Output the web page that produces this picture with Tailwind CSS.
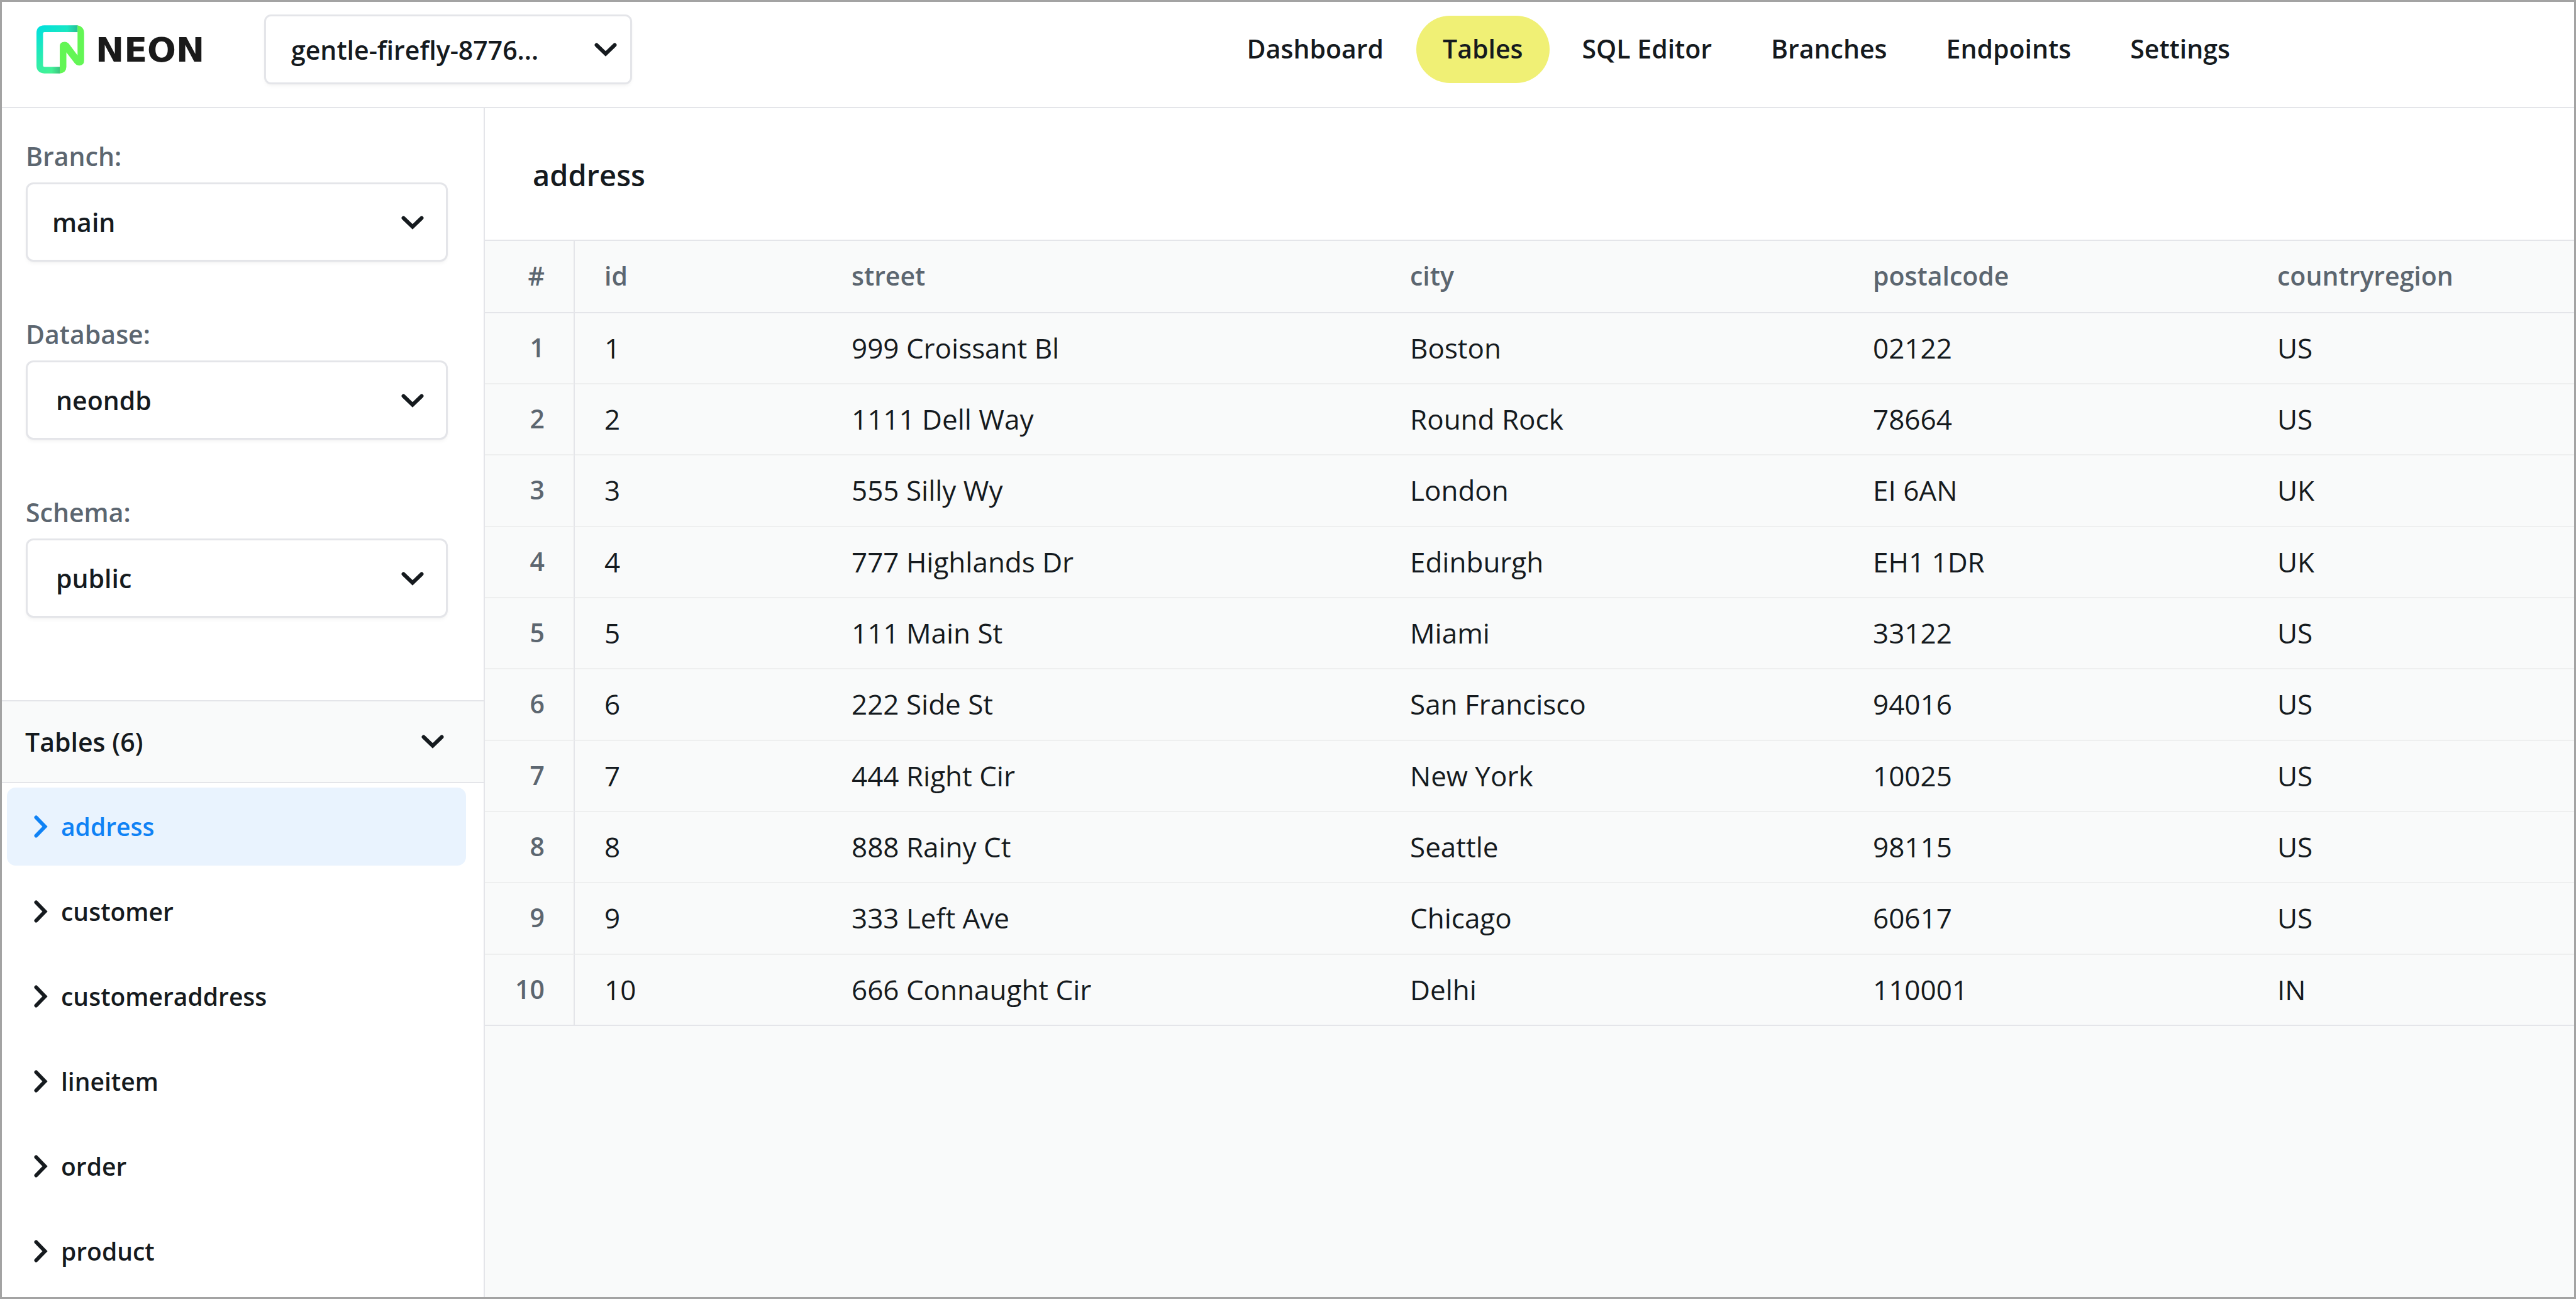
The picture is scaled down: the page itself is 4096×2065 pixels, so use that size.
<!DOCTYPE html>
<html lang="en">
<head>
<meta charset="utf-8">
<title>Neon – Tables</title>
<script src="https://cdn.jsdelivr.net/npm/@tailwindcss/browser@4"></script>
</head>
<body class="min-h-screen bg-white text-[#151a1e] font-['Open_Sans','Noto_Sans',sans-serif] text-[41px] leading-[56px] font-semibold">
<svg class="hidden" aria-hidden="true">
  <symbol id="down" viewBox="0 0 36 22"><path d="M3.5 3.5 18 17.5 32.5 3.5" fill="none" stroke="currentColor" stroke-width="6" stroke-linecap="round" stroke-linejoin="miter"/></symbol>
  <symbol id="right" viewBox="0 0 22 36"><path d="M3.5 3.5 17.5 18 3.5 32.5" fill="none" stroke="currentColor" stroke-width="6" stroke-linecap="round" stroke-linejoin="miter"/></symbol>
</svg>
<div class="flex min-h-screen flex-col border-[3px] border-[#a3a3a3]">
  <header class="flex h-[169px] items-start border-b-2 border-[#e4e5e9] pl-[55px]">
    <a href="#" class="mt-[37px] flex w-[362px] items-center gap-[18px]" aria-label="Neon">
      <svg class="h-[77px] w-[76px]" viewBox="0 0 320 347" preserveAspectRatio="none">
        <defs>
          <linearGradient id="g1" x1="0.1" y1="0" x2="0.6" y2="1"><stop offset="0" stop-color="#00e0de"/><stop offset="1" stop-color="#4df58a"/></linearGradient>
          <linearGradient id="g2" x1="0" y1="0" x2="1" y2="0"><stop offset="0" stop-color="#2e9b74" stop-opacity="0"/><stop offset="1" stop-color="#2e9b74" stop-opacity=".55"/></linearGradient>
        </defs>
        <path d="M52 1H275V50H54Q44 50 44 60V288Q44 298 54 298H157V346H52Q0 342 0 290V56Q0 4 52 1Z" fill="url(#g1)"/>
        <path d="M205 1H276V50H205Z" fill="url(#g2)"/>
        <path d="M100 298H158V346H100Z" fill="url(#g2)"/>
        <path d="M271 1Q319 8 319 58V254Q319 289 286 289Q268 289 256 273L200 195V300Q198 342 156 346V152Q156 119 189 119Q207 119 219 136L275 216V9Z" fill="#63f655"/>
      </svg>
      <span class="pt-[2px] font-['DejaVu_Sans',sans-serif] text-[54px] font-bold leading-[60px] text-[#1a1a1a]">NEON</span>
    </a>
    <div class="relative mt-[20px] w-[585px]">
      <select aria-label="Project" class="h-[111px] w-full appearance-none rounded-[11px] border-[3px] border-[#e4e5e9] bg-white pl-[40px] shadow-md shadow-black/4"><option>gentle-firefly-8776...</option></select>
      <svg class="pointer-events-none absolute right-[24px] top-[45px] h-[22px] w-[36px]"><use href="#down"/></svg>
    </div>
    <nav class="ml-auto mr-[505px] mt-[22px] flex gap-[10px] *:flex *:h-[107px] *:items-center *:rounded-full *:px-[42px] *:pb-[4px]">
      <a href="#">Dashboard</a>
      <a href="#" class="bg-[#f0f075]">Tables</a>
      <a href="#">SQL Editor</a>
      <a href="#">Branches</a>
      <a href="#">Endpoints</a>
      <a href="#">Settings</a>
    </nav>
  </header>
  <div class="flex flex-1">
    <aside class="w-[768px] shrink-0 border-r-2 border-[#e4e5e9]">
      <div class="flex h-[941px] flex-col gap-[87px] pl-[38px] pr-[57px] pt-[48px]">
        <div>
          <label for="branch" class="block h-[70px] text-[#5c6670]">Branch:</label>
          <div class="relative">
            <select id="branch" class="h-[126px] w-full appearance-none rounded-[12px] border-[3px] border-[#e4e5e9] bg-white pl-[39px] shadow-md shadow-black/4"><option>main</option></select>
            <svg class="pointer-events-none absolute right-[38px] top-[53px] h-[22px] w-[36px]"><use href="#down"/></svg>
          </div>
        </div>
        <div>
          <label for="database" class="block h-[70px] text-[#5c6670]">Database:</label>
          <div class="relative">
            <select id="database" class="h-[126px] w-full appearance-none rounded-[12px] border-[3px] border-[#e4e5e9] bg-white pl-[45px] shadow-md shadow-black/4"><option>neondb</option></select>
            <svg class="pointer-events-none absolute right-[38px] top-[53px] h-[22px] w-[36px]"><use href="#down"/></svg>
          </div>
        </div>
        <div>
          <label for="schema" class="block h-[70px] text-[#5c6670]">Schema:</label>
          <div class="relative">
            <select id="schema" class="h-[126px] w-full appearance-none rounded-[12px] border-[3px] border-[#e4e5e9] bg-white pl-[45px] shadow-md shadow-black/4"><option>public</option></select>
            <svg class="pointer-events-none absolute right-[38px] top-[53px] h-[22px] w-[36px]"><use href="#down"/></svg>
          </div>
        </div>
      </div>
      <button class="flex h-[132px] w-full items-center justify-between border-y-2 border-[#e4e5e9] bg-[#f9fafa] pl-[37px] pr-[63px]">Tables (6)<svg class="h-[22px] w-[36px]"><use href="#down"/></svg></button>
      <ul class="flex flex-col gap-[11px] pl-[8px] pr-[28px] pt-[7px] text-[39px] [&_a]:flex [&_a]:h-[124px] [&_a]:items-center [&_a]:gap-[21px] [&_a]:rounded-[14px] [&_a]:pl-[43px]">
        <li><a href="#" class="bg-[#e9f3fe] text-[#0f82f5]"><svg class="h-[36px] w-[22px]"><use href="#right"/></svg>address</a></li>
        <li><a href="#"><svg class="h-[36px] w-[22px]"><use href="#right"/></svg>customer</a></li>
        <li><a href="#"><svg class="h-[36px] w-[22px]"><use href="#right"/></svg>customeraddress</a></li>
        <li><a href="#"><svg class="h-[36px] w-[22px]"><use href="#right"/></svg>lineitem</a></li>
        <li><a href="#"><svg class="h-[36px] w-[22px]"><use href="#right"/></svg>order</a></li>
        <li><a href="#"><svg class="h-[36px] w-[22px]"><use href="#right"/></svg>product</a></li>
      </ul>
    </aside>
    <main class="min-w-0 flex-1 bg-[#f9fafa]">
      <h1 class="flex h-[209px] items-center bg-white pl-[76px] pt-[2px] text-[47px]">address</h1>
      <table class="w-full table-fixed border-separate border-spacing-0 text-left [&_th]:pb-[4px] [&_th]:text-[41px] [&_th]:font-semibold [&_th]:text-[#5c6670] [&_td]:pb-[2px] [&_td]:pl-[47px] [&_th]:pl-[47px] [&_tr>*:first-child]:border-r-2 [&_tr>*:first-child]:pl-0 [&_tr>*:first-child]:pr-[46px] [&_tr>*:first-child]:text-right [&_tr>*]:border-[#e4e5e9] [&_tbody_tr>*]:border-b-2 [&_tbody_tr:not(:last-child)>*]:border-b-[#eeefef]">
        <thead>
          <tr class="h-[117px] [&>*]:border-y-2"><th class="w-[143px]">#</th><th class="w-[393px]">id</th><th class="w-[888px]">street</th><th class="w-[736px]">city</th><th class="w-[643px]">postalcode</th><th>countryregion</th></tr>
        </thead>
        <tbody class="text-[44px] font-normal [&>tr]:h-[113px] [&>tr:nth-child(3n)]:h-[114px]">
          <tr><th>1</th><td>1</td><td>999 Croissant Bl</td><td>Boston</td><td>02122</td><td>US</td></tr>
          <tr><th>2</th><td>2</td><td>1111 Dell Way</td><td>Round Rock</td><td>78664</td><td>US</td></tr>
          <tr><th>3</th><td>3</td><td>555 Silly Wy</td><td>London</td><td>EI 6AN</td><td>UK</td></tr>
          <tr><th>4</th><td>4</td><td>777 Highlands Dr</td><td>Edinburgh</td><td>EH1 1DR</td><td>UK</td></tr>
          <tr><th>5</th><td>5</td><td>111 Main St</td><td>Miami</td><td>33122</td><td>US</td></tr>
          <tr><th>6</th><td>6</td><td>222 Side St</td><td>San Francisco</td><td>94016</td><td>US</td></tr>
          <tr><th>7</th><td>7</td><td>444 Right Cir</td><td>New York</td><td>10025</td><td>US</td></tr>
          <tr><th>8</th><td>8</td><td>888 Rainy Ct</td><td>Seattle</td><td>98115</td><td>US</td></tr>
          <tr><th>9</th><td>9</td><td>333 Left Ave</td><td>Chicago</td><td>60617</td><td>US</td></tr>
          <tr><th>10</th><td>10</td><td>666 Connaught Cir</td><td>Delhi</td><td>110001</td><td>IN</td></tr>
        </tbody>
      </table>
    </main>
  </div>
</div>
</body>
</html>
